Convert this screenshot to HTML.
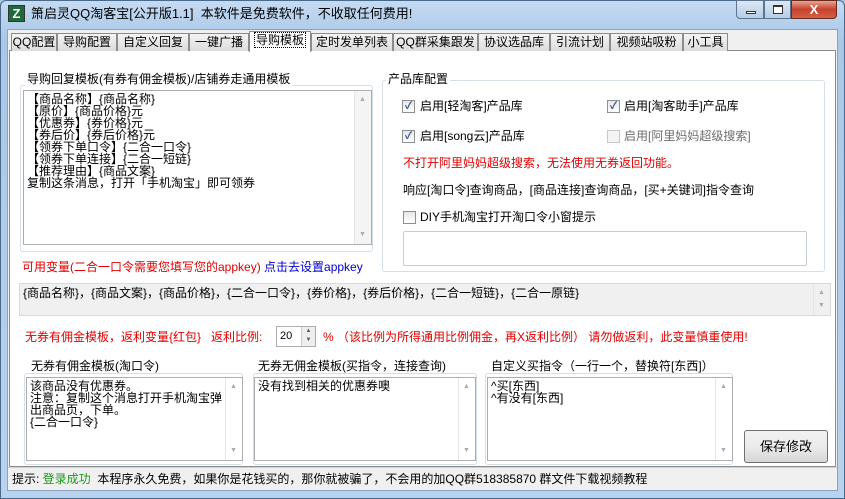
<!DOCTYPE html>
<html><head><meta charset="utf-8"><style>
*{box-sizing:border-box;margin:0;padding:0}
body{width:845px;height:499px;overflow:hidden;background:#aac8e8;font-family:"Liberation Sans","Noto Sans CJK SC",sans-serif;font-size:12px;color:#000;position:relative}
.a{position:absolute;white-space:nowrap;line-height:14px}
.frame{position:absolute;left:0;top:0;width:845px;height:499px;background:linear-gradient(#c5dbf2,#a9c7e7 40px,#b9d3ee);border:1px solid #4a6a8c;border-radius:6px 6px 0 0}
.client{position:absolute;left:7px;top:29px;width:831px;height:462px;background:#f0f0f0;border:1px solid #8aa4c0}
.tab{position:absolute;top:33px;height:18px;border:1px solid #8c8c8c;border-bottom:none;background:linear-gradient(#f4f4f4,#dcdcdc);font-size:12px;line-height:16px;text-align:center}
.tab.sel{top:31px;height:21px;background:#fff;z-index:2}
.panel{position:absolute;left:9px;top:50px;width:827px;height:417px;background:#fff;border:1px solid #8c8c8c}
.gb{position:absolute;border:1px solid #d5dfe5;border-radius:3px}
.gt{position:absolute;background:#fff;padding:0 2px;line-height:14px;white-space:nowrap}
.ta{position:absolute;border:1px solid #abadb3;background:#fff;font-size:12px;line-height:12px;padding:2px 3px;white-space:pre}
.sb{position:absolute;right:0;top:0;bottom:0;width:17px;background:#f4f4f4;border-left:1px solid #e6e6e6}
.sb:before{content:"▲";position:absolute;top:3px;left:4px;font-size:7px;color:#aaa}
.sb:after{content:"▼";position:absolute;bottom:3px;left:4px;font-size:7px;color:#aaa}
.cb{position:absolute;width:13px;height:13px;border:1px solid #8e8f8f;background:linear-gradient(#e6e6e6,#fff);font-size:10px;line-height:11px;text-align:center;color:#2a4a8a;font-weight:bold}
.red{color:#e00000}
</style></head><body>
<div class="frame"></div>
<div style="position:absolute;left:8px;top:5px;width:17px;height:17px;background:#1e6a3a;border:1px solid #333;color:#fff;font-weight:bold;font-size:13px;line-height:15px;text-align:center">Z</div>
<div class="a" style="left:31px;top:6px;font-size:13px;line-height:16px">箫启灵QQ淘客宝[公开版1.1]&nbsp; 本软件是免费软件，不收取任何费用!</div>
<div style="position:absolute;left:736px;top:0;width:28px;height:19px;border:1px solid #5a7492;border-radius:0 0 0 4px;background:linear-gradient(#dbe8f6,#b7cce4)"><div style="position:absolute;left:9px;top:10px;width:10px;height:3px;border:1px solid #333;background:#fff"></div></div>
<div style="position:absolute;left:764px;top:0;width:27px;height:19px;border:1px solid #5a7492;background:linear-gradient(#dbe8f6,#b7cce4)"><div style="position:absolute;left:8px;top:4px;width:10px;height:9px;border:1px solid #333;border-top-width:2px;background:#fff"></div></div>
<div style="position:absolute;left:791px;top:0;width:46px;height:19px;border:1px solid #6a2a20;border-radius:0 0 4px 0;background:linear-gradient(#e8a597,#c7412b 50%,#d2624a);color:#fff;font-weight:bold;font-size:13px;text-align:center;line-height:17px">X</div>
<div class="client"></div>
<div class="panel"></div>
<div class="tab" style="left:11px;width:46px">QQ配置</div>
<div class="tab" style="left:57px;width:60px">导购配置</div>
<div class="tab" style="left:117px;width:72px">自定义回复</div>
<div class="tab" style="left:189px;width:60px">一键广播</div>
<div class="tab sel" style="left:249px;width:62px"><span style="border:1px dotted #000;padding:0 1px">导购模板</span></div>
<div class="tab" style="left:311px;width:82px">定时发单列表</div>
<div class="tab" style="left:393px;width:85px">QQ群采集跟发</div>
<div class="tab" style="left:478px;width:72px">协议选品库</div>
<div class="tab" style="left:550px;width:60px">引流计划</div>
<div class="tab" style="left:610px;width:73px">视频站吸粉</div>
<div class="tab" style="left:683px;width:45px">小工具</div>

<div class="gb" style="left:20px;top:85px;width:353px;height:167px"></div>
<div class="gt" style="left:25px;top:72px">导购回复模板(有券有佣金模板)/店铺券走通用模板</div>
<div class="ta" style="left:23px;top:90px;width:349px;height:155px;font-size:12px">【商品名称】{商品名称}
【原价】{商品价格}元
【优惠券】{券价格}元
【券后价】{券后价格}元
【领券下单口令】{二合一口令}
【领券下单连接】{二合一短链}
【推荐理由】{商品文案}
复制这条消息，打开「手机淘宝」即可领券<div class="sb"></div></div>

<div class="gb" style="left:382px;top:80px;width:443px;height:192px"></div>
<div class="gt" style="left:386px;top:72px">产品库配置</div>
<div class="cb" style="left:402px;top:100px">✓</div><div class="a" style="left:420px;top:99px">启用[轻淘客]产品库</div>
<div class="cb" style="left:607px;top:100px">✓</div><div class="a" style="left:624px;top:99px">启用[淘客助手]产品库</div>
<div class="cb" style="left:402px;top:130px">✓</div><div class="a" style="left:420px;top:129px">启用[song云]产品库</div>
<div class="cb" style="left:607px;top:130px;border-color:#c8c8c8;background:#f4f4f4"></div><div class="a" style="left:624px;top:129px;color:#6d6d6d">启用[阿里妈妈超级搜索]</div>
<div class="a red" style="left:403px;top:156px">不打开阿里妈妈超级搜索，无法使用无券返回功能。</div>
<div class="a" style="left:403px;top:183px">响应[淘口令]查询商品，[商品连接]查询商品，[买+关键词]指令查询</div>
<div class="cb" style="left:403px;top:211px"></div><div class="a" style="left:420px;top:210px">DIY手机淘宝打开淘口令小窗提示</div>
<div style="position:absolute;left:403px;top:231px;width:404px;height:35px;border:1px solid #c5cdd6;border-radius:2px"></div>

<div class="a red" style="left:22px;top:260px">可用变量(二合一口令需要您填写您的appkey) <span style="color:#0000d0">点击去设置appkey</span></div>
<div class="ta" style="left:19px;top:283px;width:812px;height:33px;background:#f0f0f0;border-color:#d8d8d8;padding:3px 3px">{商品名称}，{商品文案}，{商品价格}，{二合一口令}，{券价格}，{券后价格}，{二合一短链}，{二合一原链}<div class="sb" style="background:#f0f0f0"></div></div>

<div class="a red" style="left:25px;top:330px">无券有佣金模板，返利变量{红包}&nbsp;&nbsp; 返利比例:</div>
<div style="position:absolute;left:276px;top:326px;width:40px;height:21px;border:1px solid #abadb3;background:#fff"><span style="position:absolute;left:3px;top:3px;font-size:11px">20</span><div style="position:absolute;right:0;top:0;width:14px;height:19px;background:#eee;border-left:1px solid #ccc;font-size:6px;line-height:9px;text-align:center;color:#555">▲<br>▼</div></div>
<div class="a red" style="left:323px;top:330px">% （该比例为所得通用比例佣金，再X返利比例） 请勿做返利，此变量慎重使用!</div>

<div class="gb" style="left:24px;top:373px;width:219px;height:92px"></div>
<div class="gt" style="left:29px;top:359px">无券有佣金模板(淘口令)</div>
<div class="ta" style="left:26px;top:377px;width:217px;height:84px">该商品没有优惠券。
注意：复制这个消息打开手机淘宝弹
出商品页，下单。
{二合一口令}<div class="sb" style="background:#fff"></div></div>

<div class="gb" style="left:253px;top:373px;width:224px;height:92px"></div>
<div class="gt" style="left:256px;top:359px">无券无佣金模板(买指令，连接查询)</div>
<div class="ta" style="left:254px;top:377px;width:222px;height:84px">没有找到相关的优惠券噢<div class="sb" style="background:#fff"></div></div>

<div class="gb" style="left:485px;top:373px;width:248px;height:92px"></div>
<div class="gt" style="left:489px;top:359px">自定义买指令（一行一个，替换符[东西]）</div>
<div class="ta" style="left:487px;top:377px;width:246px;height:84px">^买[东西]
^有没有[东西]<div class="sb" style="background:#fff"></div></div>

<div style="position:absolute;left:744px;top:430px;width:84px;height:33px;border:1px solid #707070;border-radius:3px;background:linear-gradient(#f2f2f2,#ebebeb 50%,#d6d6d6);text-align:center;line-height:31px;font-size:13px">保存修改</div>

<div style="position:absolute;left:8px;top:467px;width:829px;height:23px;background:#f0f0f0;border-top:1px solid #d0d0d0"></div>
<div class="a" style="left:12px;top:472px">提示: <span style="color:#1a9a1a">登录成功</span>&nbsp; 本程序永久免费，如果你是花钱买的，那你就被骗了，不会用的加QQ群518385870 群文件下载视频教程</div>
</body></html>
